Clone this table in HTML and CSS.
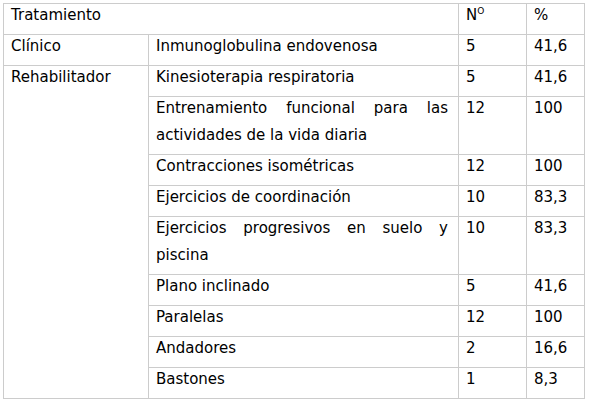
FILE: index.html
```html
<!DOCTYPE html>
<html lang="es">
<head>
<meta charset="utf-8">
<title>Tratamiento</title>
<link rel="stylesheet" href="styles.css">
</head>
<body>
<div class="page">
<table class="data">
  <colgroup>
    <col class="c1"><col class="c2"><col class="c3"><col class="c4">
  </colgroup>
  <tr>
    <td colspan="2"><div class="t">Tratamiento</div></td>
    <td><div class="t">N<sup class="sup">O</sup></div></td>
    <td><div class="t">%</div></td>
  </tr>
  <tr>
    <td><div class="t">Clínico</div></td>
    <td><div class="t">Inmunoglobulina endovenosa</div></td>
    <td><div class="t">5</div></td>
    <td><div class="t">41,6</div></td>
  </tr>
  <tr>
    <td rowspan="10"><div class="t">Rehabilitador</div></td>
    <td><div class="t">Kinesioterapia respiratoria</div></td>
    <td><div class="t">5</div></td>
    <td><div class="t">41,6</div></td>
  </tr>
  <tr>
    <td><div class="t j">Entrenamiento funcional para las actividades de la vida diaria</div></td>
    <td><div class="t">12</div></td>
    <td><div class="t">100</div></td>
  </tr>
  <tr>
    <td><div class="t">Contracciones isométricas</div></td>
    <td><div class="t">12</div></td>
    <td><div class="t">100</div></td>
  </tr>
  <tr>
    <td><div class="t">Ejercicios de coordinación</div></td>
    <td><div class="t">10</div></td>
    <td><div class="t">83,3</div></td>
  </tr>
  <tr>
    <td><div class="t j">Ejercicios progresivos en suelo y piscina</div></td>
    <td><div class="t">10</div></td>
    <td><div class="t">83,3</div></td>
  </tr>
  <tr>
    <td><div class="t">Plano inclinado</div></td>
    <td><div class="t">5</div></td>
    <td><div class="t">41,6</div></td>
  </tr>
  <tr>
    <td><div class="t">Paralelas</div></td>
    <td><div class="t">12</div></td>
    <td><div class="t">100</div></td>
  </tr>
  <tr>
    <td><div class="t">Andadores</div></td>
    <td><div class="t">2</div></td>
    <td><div class="t">16,6</div></td>
  </tr>
  <tr>
    <td><div class="t">Bastones</div></td>
    <td><div class="t">1</div></td>
    <td><div class="t">8,3</div></td>
  </tr>
</table>
</div>
</body>
</html>
```
FILE: styles.css
```css
html, body {
  margin: 0;
  padding: 0;
  background: #ffffff;
}
.page {
  padding: 3px 0 0 3px;
}
.data {
  border-collapse: collapse;
  table-layout: fixed;
  width: 581px;
  font-family: "DejaVu Sans", Verdana, sans-serif;
  font-size: 15px;
  color: #000000;
}
.c1 { width: 145px; }
.c2 { width: 310px; }
.c3 { width: 68px; }
.c4 { width: 58px; }
.data td {
  border: 1px solid #cccccc;
  padding: 0 10px 3px 7px;
  vertical-align: top;
  line-height: 27px;
}
.t {
  margin: -2px 0 2px;
}
.j {
  text-align: justify;
}
.sup {
  font-size: 9px;
  vertical-align: 6px;
  line-height: 0;
}
```
